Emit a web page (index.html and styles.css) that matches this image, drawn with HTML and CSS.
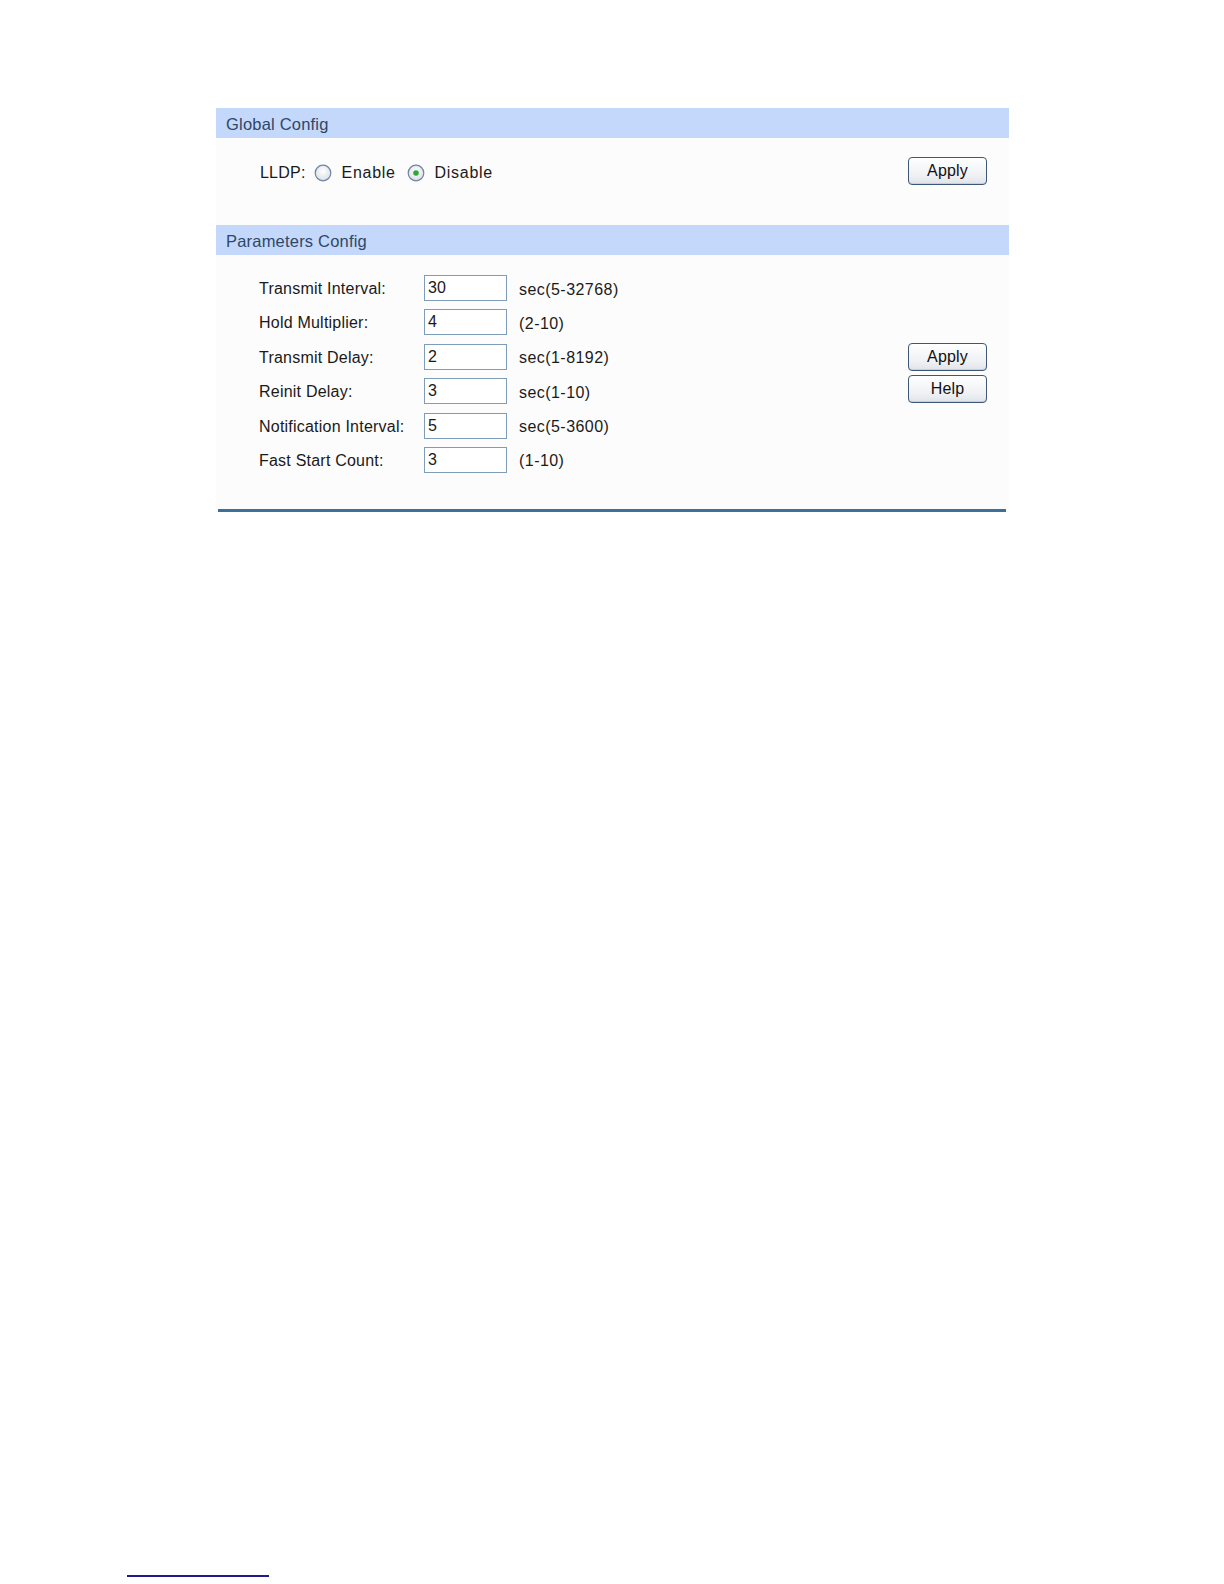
FILE: index.html
```html
<!DOCTYPE html>
<html>
<head>
<meta charset="utf-8">
<title>LLDP Config</title>
<link rel="stylesheet" href="styles.css">
</head>
<body>
<div class="page">
  <div class="panel">
    <div class="bar">Global Config</div>
    <div class="global-body">
      <div class="lldp">
        <span class="lbl">LLDP:</span>
        <span class="radio"><svg width="18" height="18" viewBox="0 0 18 18"><defs><radialGradient id="rg1" cx="50%" cy="40%" r="60%"><stop offset="0" stop-color="#ffffff"/><stop offset="1" stop-color="#d9dee6"/></radialGradient></defs><circle cx="9" cy="9" r="7.8" fill="url(#rg1)" stroke="#6f849f" stroke-width="1.2"/></svg></span>
        <span class="opt">Enable</span>
        <span class="radio"><svg width="18" height="18" viewBox="0 0 18 18"><defs><radialGradient id="rg2" cx="50%" cy="40%" r="60%"><stop offset="0" stop-color="#ffffff"/><stop offset="1" stop-color="#d9dee6"/></radialGradient></defs><circle cx="9" cy="9" r="7.8" fill="url(#rg2)" stroke="#6f849f" stroke-width="1.2"/><circle cx="9" cy="9" r="2.8" fill="#2fa53a"/></svg></span>
        <span class="opt">Disable</span>
      </div>
      <button class="btn">Apply</button>
    </div>
    <div class="bar">Parameters Config</div>
    <div class="param-body">
      <div class="grid">
        <span class="lbl">Transmit Interval:</span><span class="field">30</span><span class="hint">sec(5-32768)</span>
        <span class="lbl">Hold Multiplier:</span><span class="field">4</span><span class="hint">(2-10)</span>
        <span class="lbl">Transmit Delay:</span><span class="field">2</span><span class="hint">sec(1-8192)</span>
        <span class="lbl">Reinit Delay:</span><span class="field">3</span><span class="hint">sec(1-10)</span>
        <span class="lbl">Notification Interval:</span><span class="field">5</span><span class="hint">sec(5-3600)</span>
        <span class="lbl">Fast Start Count:</span><span class="field">3</span><span class="hint">(1-10)</span>
      </div>
      <div class="btns">
        <button class="btn">Apply</button>
        <button class="btn">Help</button>
      </div>
    </div>
    <div class="rule"></div>
  </div>
  <div class="footnote-line"></div>
</div>
</body>
</html>
```
FILE: styles.css
```css
html, body {
  margin: 0;
  padding: 0;
  background: #ffffff;
  height: 1584px;
  overflow: hidden;
}
body {
  font-family: "Liberation Sans", Arial, sans-serif;
  font-size: 16px;
  color: #1a1a1a;
  letter-spacing: 0.22px;
}
.page {
  padding-top: 108px;
}
.panel {
  margin-left: 216px;
  width: 793px;
  background: #fcfcfc;
}
.bar {
  height: 30px;
  line-height: 32px;
  background: #c4d8fb;
  color: #2f4767;
  padding-left: 10px;
  font-size: 16.5px;
  letter-spacing: 0.2px;
}
.global-body {
  height: 87px;
  box-sizing: border-box;
  padding: 19px 22px 0 44px;
  display: flex;
  justify-content: space-between;
  align-items: flex-start;
}
.lldp {
  display: flex;
  align-items: center;
  height: 32px;
}
.lldp .lbl {
  margin-right: 8px;
}
.radio {
  display: inline-flex;
  width: 18px;
  height: 18px;
  margin-right: 10px;
}
.opt {
  margin-right: 11px;
  letter-spacing: 0.7px;
}
.btn {
  width: 79px;
  height: 28px;
  box-sizing: border-box;
  border: 1px solid #3d5877;
  border-radius: 4px;
  background: linear-gradient(#ffffff, #eef0f3 70%, #dfe3e9);
  box-shadow: inset 0 -1px 0 #c9cfd8;
  font-family: "Liberation Sans", Arial, sans-serif;
  font-size: 16px;
  letter-spacing: 0.15px;
  color: #111;
  padding: 0;
  line-height: 26px;
}
.param-body {
  display: flex;
  justify-content: space-between;
  align-items: flex-start;
  padding: 20px 22px 36px 43px;
}
.grid {
  display: grid;
  grid-template-columns: 165px 83px auto;
  grid-auto-rows: 26px;
  row-gap: 8.4px;
  align-items: center;
}
.grid .lbl {
  padding-top: 2px;
}
.field {
  box-sizing: border-box;
  height: 26px;
  border: 1px solid #7f9db9;
  background: #ffffff;
  padding-left: 3px;
  line-height: 23px;
  font-size: 16px;
}
.hint {
  padding-left: 12px;
  padding-top: 3px;
  letter-spacing: 0.45px;
}
.btns {
  display: flex;
  flex-direction: column;
  gap: 4px;
  margin-top: 68px;
}
.rule {
  margin-left: 2px;
  width: 788px;
  height: 3px;
  background: #3b6f9c;
}
.footnote-line {
  margin-top: 1063px;
  margin-left: 127px;
  width: 142px;
  height: 2px;
  background: #1c1c8c;
}
```
